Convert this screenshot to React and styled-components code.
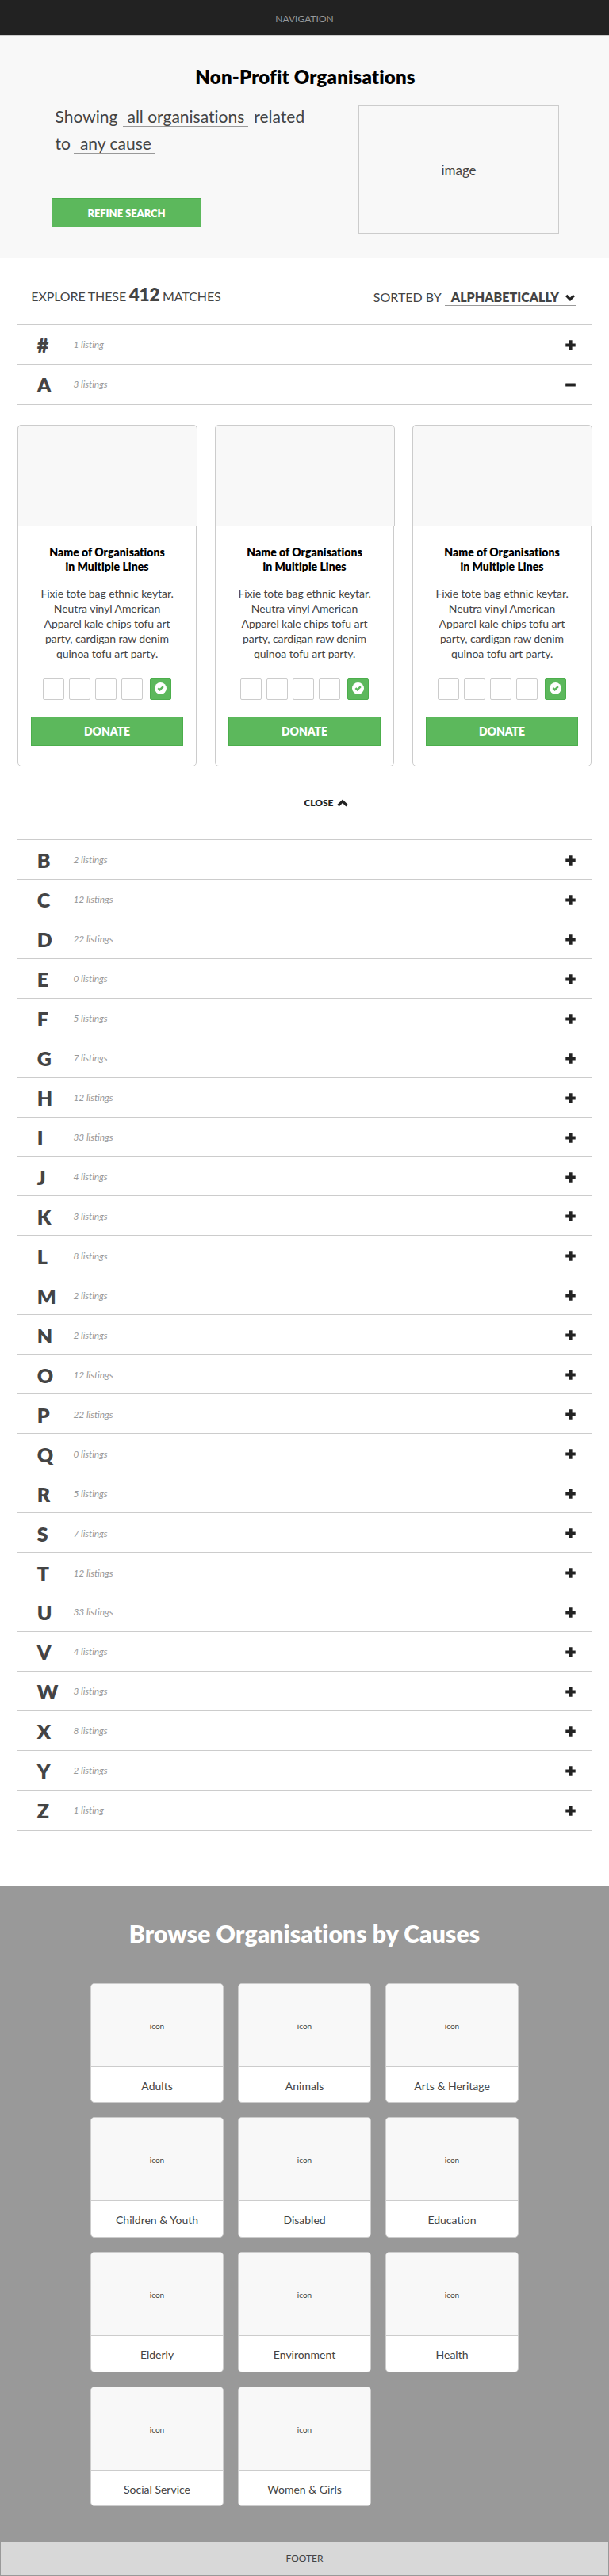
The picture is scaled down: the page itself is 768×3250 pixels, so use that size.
import React from "react";
import styled, { createGlobalStyle } from "styled-components";

const Global = createGlobalStyle`
  *, *::before, *::after { box-sizing: border-box; }
  body {
    margin: 0;
    background: #fff;
    color: #444;
    font: 400 14px/20px Lato, sans-serif;
    font-variant-ligatures: none;
  }
  h1, h2, h3, p { margin: 0; }
  button { font-family: inherit; }
`;

const Nav = styled.nav`
  height: 44px;
  background: #222;
  color: #999;
  font-size: 12px;
  line-height: 47px;
  text-align: center;
`;

const Hero = styled.header`
  height: 282px;
  border: solid #ccc;
  border-width: 1px 0;
  background: #f8f8f8;
  padding: 35px 63px 0 65px;
`;

const HeroTitle = styled.h1`
  color: #000;
  font-size: 24px;
  font-weight: 800;
  letter-spacing: 0.17px;
  line-height: 34px;
  text-align: center;
`;

const HeroBody = styled.div`
  display: flex;
  justify-content: space-between;
  margin-top: 19px;
`;

const Filters = styled.div`
  width: 340px;
`;

const Sentence = styled.div`
  height: 117px;
  padding-left: 4.5px;
  font-size: 21px;
`;

const SentenceLine = styled.div`
  display: flex;
  align-items: baseline;
  height: 33.5px;
  line-height: 28px;
  white-space: nowrap;
`;

const Choice = styled.span`
  margin: 0 7px 0 ${(p) => p.$before}px;
  padding: 0 5px 0 ${(p) => p.$indent}px;
  border-bottom: 1px solid #999;
  line-height: 24px;
`;

const Button = styled.button`
  display: block;
  width: ${(p) => p.$width}px;
  height: 37px;
  padding: 1px 0 0;
  border: 1px solid #4cae4c;
  background: #5cb85c;
  color: #fff;
  font-size: ${(p) => p.$size}px;
  font-weight: 800;
  letter-spacing: -0.05px;
`;

const ImageBox = styled.div`
  width: 253px;
  height: 162px;
  border: 1px solid #ccc;
  font-size: 17px;
  line-height: 161px;
  text-align: center;
`;

const Summary = styled.div`
  display: flex;
  justify-content: space-between;
  align-items: flex-start;
  height: 83px;
  padding: 32.5px 41px 0 39.3px;
  font-size: 16px;
  line-height: 26px;
`;

const Matches = styled.div`
  letter-spacing: -0.1px;
  word-spacing: -0.4px;
`;

const Count = styled.strong`
  font-size: 22.5px;
  font-weight: 800;
`;

const Sorting = styled.div`
  display: flex;
  align-items: baseline;
  gap: 4.2px;
  padding-top: 3.3px;
`;

const SortChoice = styled.span`
  display: flex;
  align-items: baseline;
  gap: 8.3px;
  padding: 0 1.7px 0 7.8px;
  border-bottom: 1px solid #999;
  font-weight: 800;
  line-height: 20px;
`;

const List = styled.ul`
  margin: 0 21px;
  padding: 0 0 1px;
  border: 1px solid #ccc;
  border-top: 0;
  list-style: none;
`;

const Row = styled.li`
  display: grid;
  grid-template-columns: 45.7px 1fr auto;
  align-items: center;
  height: 49.96px;
  padding: 2px 20.5px 0 24.8px;
  border-top: 1px solid #ccc;
`;

const Letter = styled.span`
  font-size: 25px;
  font-weight: 800;
  line-height: 30px;
`;

const Listings = styled.em`
  color: #999;
  font-size: 12px;
  letter-spacing: -0.1px;
`;

const Cards = styled.div`
  display: flex;
  gap: 23px;
  padding: 25px 22px 0;
`;

const Card = styled.article`
  width: 226px;
  height: 431px;
  border: 1px solid #ccc;
  border-radius: 5px;
  text-align: center;
`;

const CardImage = styled.div`
  height: 128px;
  margin: -1px -2px 0 -1px;
  border: 1px solid #ccc;
  border-radius: 5px 5px 0 0;
  background: #f8f8f8;
`;

const CardBody = styled.div`
  padding: 24.5px 16px 0;
`;

const CardTitle = styled.h3`
  color: #000;
  font-size: 14px;
  font-weight: 800;
  letter-spacing: 0.05px;
  line-height: 18px;
`;

const CardText = styled.p`
  margin-top: 15px;
  padding: 0 9px;
  letter-spacing: -0.08px;
  line-height: 19px;
`;

const Badges = styled.div`
  display: flex;
  gap: 6px;
  margin: 21.5px 0 21px 15px;
`;

const Badge = styled.span`
  display: flex;
  align-items: center;
  justify-content: center;
  width: 27px;
  height: 27px;
  margin-left: ${(p) => (p.$on ? 3 : 0)}px;
  padding-bottom: 2px;
  border: 1px solid ${(p) => (p.$on ? "#4cae4c" : "#ccc")};
  border-radius: 2px;
  background: ${(p) => (p.$on ? "#5cb85c" : "#fff")};
`;

const Close = styled.div`
  display: flex;
  align-items: center;
  gap: 4.5px;
  height: 92px;
  padding-left: 383.5px;
  color: #222;
  font-size: 12px;
  font-weight: 800;
  letter-spacing: -0.1px;
`;

const Causes = styled.section`
  height: 826px;
  margin-top: 70px;
  padding-top: 37px;
  background: #999;
`;

const CausesTitle = styled.h2`
  color: #fff;
  font-size: 30px;
  font-weight: 800;
  letter-spacing: 0.13px;
  line-height: 44px;
  text-align: center;
`;

const CauseGrid = styled.div`
  display: grid;
  grid-template-columns: repeat(3, 167.3px);
  gap: 18px 18.7px;
  margin: 41px 0 0 114.4px;
`;

const Cause = styled.div`
  height: 151.7px;
  border: 1px solid #ccc;
  border-radius: 5px;
  background: #fff;
  overflow: hidden;
  text-align: center;
  line-height: 47px;
`;

const CauseIcon = styled.div`
  height: 105px;
  border-bottom: 1px solid #ccc;
  background: #f8f8f8;
  font-size: 10px;
  line-height: 106px;
`;

const Footer = styled.footer`
  height: 44px;
  border: 1px solid #999;
  background: #d8d8d8;
  font-size: 12px;
  line-height: 41.5px;
  text-align: center;
`;

const Svg = styled.svg`
  display: block;
  flex: none;
  fill: #222;
`;

const LiftedSvg = styled(Svg)`
  margin-bottom: 1px;
`;

const Plus = () => (
  <Svg width="13" height="13" viewBox="0 0 13 13"><path d="M4.400 .3h4.200v4.100h4.100v4.200h-4.100v4.100h-4.200v-4.100h-4.100v-4.200h4.100z" /></Svg>
);
const Minus = () => (
  <Svg width="13" height="13" viewBox="0 0 13 13"><rect x="0.2" y="4.400" width="12.600" height="4.200" rx="0.4" /></Svg>
);
const ChevronDown = () => (
  <LiftedSvg width="12" height="10" viewBox="0 0 12 10"><path d="M0 3L2.300 .7 6 4.400 9.700 .7 12 3 6 9z" /></LiftedSvg>
);
const ChevronUp = () => (
  <Svg width="14" height="10" viewBox="0 0 14 10"><path d="M.3 7.100L7 .4l6.700 6.700-2.300 2.300L7 5 2.600 9.400z" /></Svg>
);
const OkSign = () => (
  <Svg width="15" height="15" viewBox="0 0 15 15">
    <circle cx="7.500" cy="7.500" r="7.500" fill="#fff" />
    <path d="M3.500 8L5.300 6.200 6.700 7.600 10 4.300 11.700 6 6.700 11z" fill="#5cb85c" />
  </Svg>
);

const counts = [2, 12, 22, 0, 5, 7, 12, 33, 4, 3, 8, 2, 2, 12, 22, 0, 5, 7, 12, 33, 4, 3, 8, 2, 1];
const rest = "BCDEFGHIJKLMNOPQRSTUVWXYZ".split("").map((letter, i) => ({ letter, count: counts[i] }));
const causes = ["Adults", "Animals", "Arts & Heritage", "Children & Youth", "Disabled", "Education",
  "Elderly", "Environment", "Health", "Social Service", "Women & Girls"];

const ListRow = ({ letter, count, open }) => (
  <Row>
    <Letter>{letter}</Letter>
    <Listings>{count} {count === 1 ? "listing" : "listings"}</Listings>
    {open ? <Minus /> : <Plus />}
  </Row>
);

const OrganisationCard = () => (
  <Card>
    <CardImage />
    <CardBody>
      <CardTitle>Name of Organisations<br />in Multiple Lines</CardTitle>
      <CardText>Fixie tote bag ethnic keytar. Neutra vinyl American Apparel kale chips tofu art party, cardigan raw denim quinoa tofu art party.</CardText>
      <Badges>
        <Badge /><Badge /><Badge /><Badge />
        <Badge $on><OkSign /></Badge>
      </Badges>
      <Button $width={192} $size={14}>DONATE</Button>
    </CardBody>
  </Card>
);

export default function App() {
  return (
    <>
      <Global />
      <Nav>NAVIGATION</Nav>
      <Hero>
        <HeroTitle>Non-Profit Organisations</HeroTitle>
        <HeroBody>
          <Filters>
            <Sentence>
              <SentenceLine>
                <span>Showing</span>
                <Choice $before={6.6} $indent={5.5}>all organisations</Choice>
                <span>related</span>
              </SentenceLine>
              <SentenceLine>
                <span>to</span>
                <Choice $before={4.5} $indent={7.5}>any cause</Choice>
              </SentenceLine>
            </Sentence>
            <Button $width={189} $size={13}>REFINE SEARCH</Button>
          </Filters>
          <ImageBox>image</ImageBox>
        </HeroBody>
      </Hero>
      <Summary>
        <Matches>EXPLORE THESE <Count>412</Count> MATCHES</Matches>
        <Sorting>
          <span>SORTED BY</span>
          <SortChoice>ALPHABETICALLY<ChevronDown /></SortChoice>
        </Sorting>
      </Summary>
      <List>
        <ListRow letter="#" count={1} />
        <ListRow letter="A" count={3} open />
      </List>
      <Cards>
        <OrganisationCard />
        <OrganisationCard />
        <OrganisationCard />
      </Cards>
      <Close>CLOSE<ChevronUp /></Close>
      <List>
        {rest.map((row) => <ListRow key={row.letter} {...row} />)}
      </List>
      <Causes>
        <CausesTitle>Browse Organisations by Causes</CausesTitle>
        <CauseGrid>
          {causes.map((name) => (
            <Cause key={name}><CauseIcon>icon</CauseIcon>{name}</Cause>
          ))}
        </CauseGrid>
      </Causes>
      <Footer>FOOTER</Footer>
    </>
  );
}
